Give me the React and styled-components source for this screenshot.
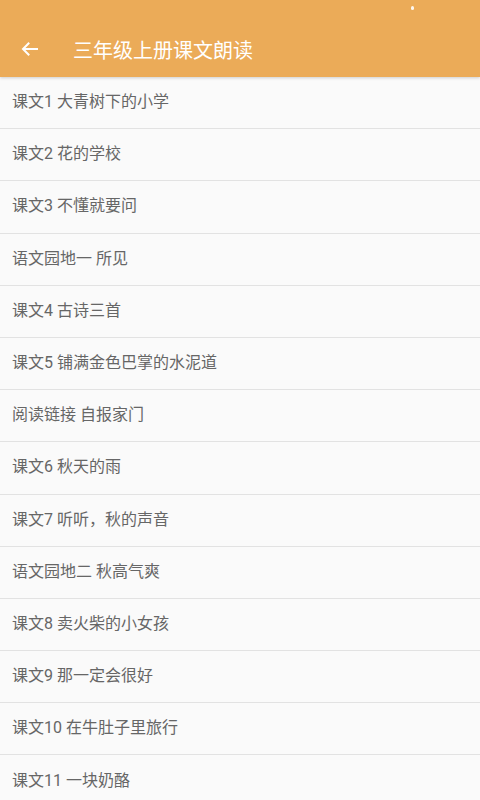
import React from "react";
import styled, { createGlobalStyle } from "styled-components";

const GlobalStyle = createGlobalStyle`
  html, body {
    margin: 0;
    padding: 0;
    background: #fafafa;
    font-family: Roboto, "Noto Sans CJK SC", "Noto Sans", sans-serif;
  }
`;

const Page = styled.div`
  width: 480px;
  height: 800px;
  overflow: hidden;
  background: #fafafa;
`;

const Header = styled.header`
  height: 77px;
  background: #ebab58;
  box-shadow: 0 1px 3px rgba(0, 0, 0, 0.18);
  display: flex;
  flex-direction: column;
`;

const StatusBar = styled.div`
  height: 24px;
  display: flex;
  justify-content: flex-end;
  padding-right: 66px;
`;

const StatusMark = styled.span`
  margin-top: 6px;
  width: 3px;
  height: 4px;
  border-radius: 2px;
  background: rgba(255, 255, 255, 0.9);
`;

const Toolbar = styled.div`
  flex: 1;
  display: flex;
  align-items: center;
  padding-bottom: 3px;
`;

const BackButton = styled.button`
  width: 40px;
  margin-left: 9px;
  height: 40px;
  border: none;
  background: transparent;
  padding: 0;
  display: flex;
  align-items: center;
  justify-content: center;
`;

const Title = styled.h1`
  margin: 0 0 0 24px;
  font-size: 20px;
  font-weight: 400;
  color: #fff;
`;

const List = styled.ul`
  list-style: none;
  margin: 0;
  padding: 0;
`;

const Item = styled.li`
  box-sizing: border-box;
  height: 52.2px;
  border-bottom: 1px solid #e2e2e2;
  display: flex;
  align-items: center;
  padding: 0 0 5px 12px;
  font-size: 16px;
  color: #666;
`;

const lessons = [
  "课文1 大青树下的小学",
  "课文2 花的学校",
  "课文3 不懂就要问",
  "语文园地一 所见",
  "课文4 古诗三首",
  "课文5 铺满金色巴掌的水泥道",
  "阅读链接 自报家门",
  "课文6 秋天的雨",
  "课文7 听听，秋的声音",
  "语文园地二 秋高气爽",
  "课文8 卖火柴的小女孩",
  "课文9 那一定会很好",
  "课文10 在牛肚子里旅行",
  "课文11 一块奶酪",
];

const BackIcon = () => (
  <svg width="17" height="14" viewBox="0 0 17 14" fill="none">
    <path
      d="M16 7H2.5M7.5 1.5L2 7l5.5 5.5"
      stroke="#fff"
      strokeWidth="2"
      strokeLinecap="square"
    />
  </svg>
);

const App = () => {
  return (
    <Page>
      <GlobalStyle />
      <Header>
        <StatusBar>
          <StatusMark />
        </StatusBar>
        <Toolbar>
          <BackButton aria-label="返回">
            <BackIcon />
          </BackButton>
          <Title>三年级上册课文朗读</Title>
        </Toolbar>
      </Header>
      <List>
        {lessons.map((name) => (
          <Item key={name}>{name}</Item>
        ))}
      </List>
    </Page>
  );
};

export default App;
